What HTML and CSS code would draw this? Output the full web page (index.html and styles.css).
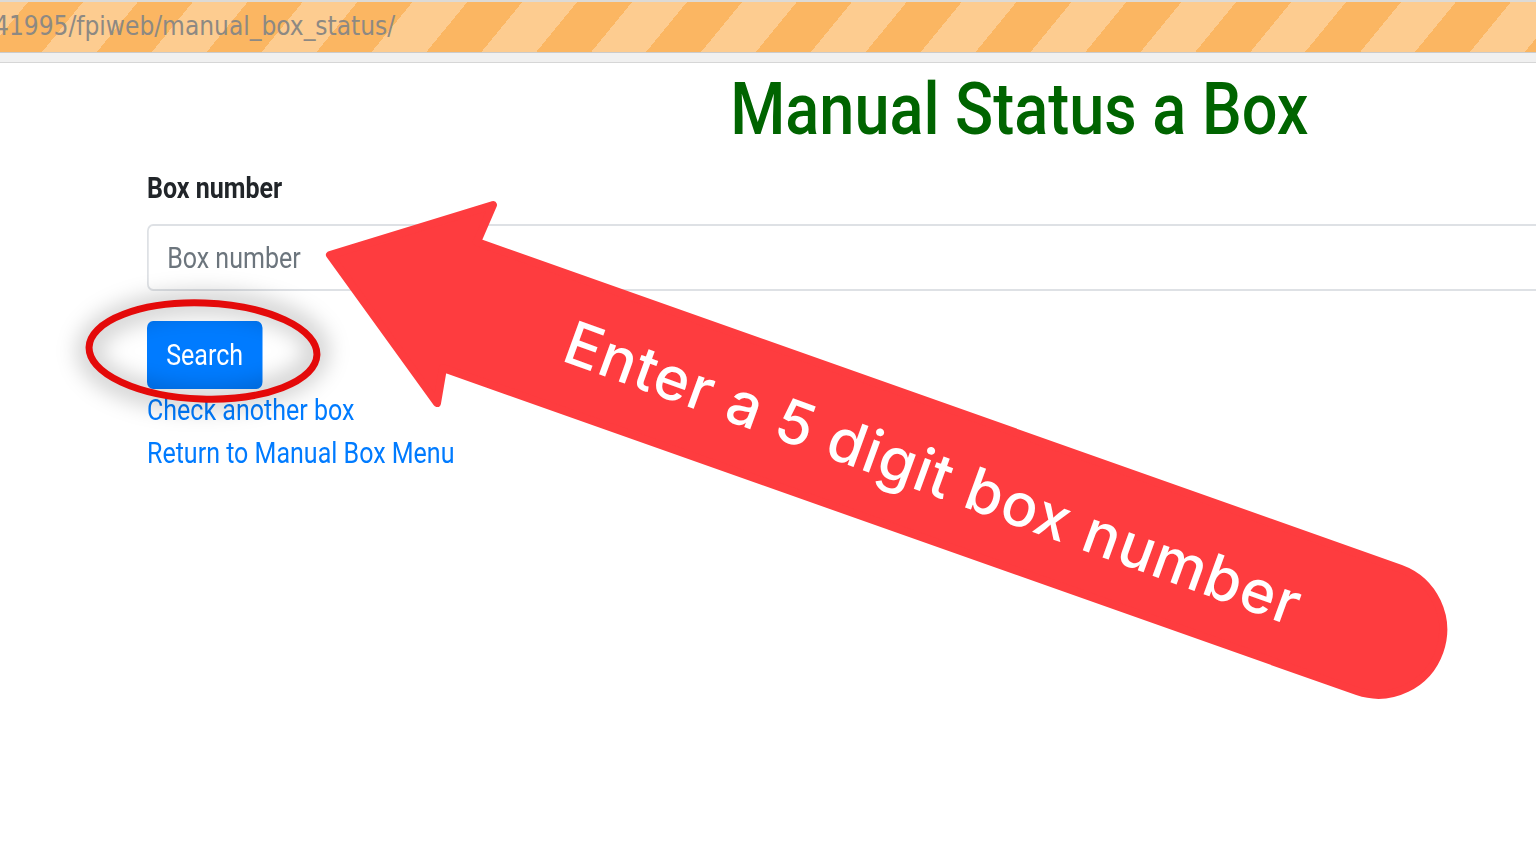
FILE: index.html
```html
<!DOCTYPE html>
<html lang="en">
<head>
<meta charset="utf-8">
<title>Manual Status a Box</title>
<link rel="stylesheet" href="styles.css">
</head>
<body>
<div class="chrome">
  <div class="urlbar"><span class="url">41995/fpiweb/manual_box_status/</span></div>
  <div class="toolbar-edge"></div>
</div>
<div class="viewport">
  <div class="page">
    <div class="container">
      <h1 class="title">Manual Status a Box</h1>
      <form class="box-form">
        <div class="form-group">
          <label class="field-label" for="box">Box number</label>
          <input class="field-input" id="box" type="text" placeholder="Box number">
        </div>
        <button class="btn-search" type="button">Search</button>
      </form>
      <a class="nav-link" href="#">Check another box</a>
      <a class="nav-link" href="#">Return to Manual Box Menu</a>
    </div>
  </div>
</div>
<svg class="overlay" width="1536" height="862" viewBox="0 0 1536 862">
  <defs>
    <filter id="halo" x="-50%" y="-80%" width="200%" height="260%">
      <feGaussianBlur stdDeviation="10"/>
    </filter>
  </defs>
  <ellipse class="halo" cx="203" cy="351" rx="114" ry="48" filter="url(#halo)"/>
  <ellipse class="ring" cx="203" cy="351" rx="114" ry="48" transform="rotate(2 203 351)"/>
  <path class="arrow" d="M330 255 L493 205 L477 242 L1400.6 568.7 A65 65 0 0 1 1357.4 691.3 L443 368 L437 403 Z"/>
  <text class="arrow-text" x="560" y="360" transform="rotate(20 560 360)">Enter a 5 digit box number</text>
</svg>
</body>
</html>
```
FILE: styles.css
```css
html, body {
  margin: 0;
  padding: 0;
  height: 100%;
  overflow: hidden;
  background: #ffffff;
}

.chrome {
  width: 100%;
}

.urlbar {
  height: 50px;
  border-top: 2px solid #dcdad6;
  background: repeating-linear-gradient(129.3deg,
    #fdcc90 0px, #fdcc90 21.6px,
    #fbb662 21.6px, #fbb662 64.2px,
    #fdcc90 64.2px, #fdcc90 85px);
  overflow: hidden;
  white-space: nowrap;
}

.url {
  display: inline-block;
  margin-left: -6px;
  font-family: "DejaVu Sans Condensed", "DejaVu Sans", sans-serif;
  font-stretch: semi-condensed;
  font-size: 26px;
  line-height: 48px;
  color: #8d8983;
}

.toolbar-edge {
  height: 9px;
  background: #f0f0f0;
  border-top: 1px solid #cbcbcb;
  border-bottom: 1px solid #d6d6d6;
}

.viewport {
  width: 100%;
  overflow: hidden;
}

.page {
  width: 2200px;
  transform: scaleX(0.875);
  transform-origin: 0 0;
  font-family: Roboto, "Liberation Sans", sans-serif;
}

.container {
  width: 1994px;
  padding-left: 168px;
}

.title {
  margin: 4px 0 14px;
  font-size: 72px;
  font-weight: 500;
  line-height: 1.2;
  color: #006400;
  text-align: center;
}

.form-group {
  margin-bottom: 30px;
}

.field-label {
  display: block;
  margin-bottom: 14px;
  font-size: 28.6px;
  font-weight: 700;
  line-height: 1.5;
  color: #212529;
}

.field-input {
  display: block;
  box-sizing: border-box;
  width: 100%;
  height: 67px;
  margin: 0;
  padding: 0 21px;
  border: 2px solid #dee1e5;
  border-radius: 7px;
  font-family: Roboto, "Liberation Sans", sans-serif;
  font-size: 28.6px;
  color: #495057;
  background: #fff;
}

.field-input::placeholder {
  color: #6c757d;
}

.btn-search {
  display: block;
  height: 68px;
  margin: 0;
  padding: 0 22px;
  border: none;
  border-radius: 7px;
  background: #007bff;
  color: #fff;
  font-family: Roboto, "Liberation Sans", sans-serif;
  font-size: 28.6px;
  line-height: 1.5;
}

.nav-link {
  display: block;
  width: max-content;
  font-size: 28.6px;
  line-height: 1.5;
  color: #007bff;
  text-decoration: none;
}

.overlay {
  position: absolute;
  top: 0;
  left: 0;
  pointer-events: none;
}

.halo {
  fill: none;
  stroke: rgba(0, 0, 0, 0.16);
  stroke-width: 26;
}

.ring {
  fill: none;
  stroke: #e40a0a;
  stroke-width: 7;
}

.arrow {
  fill: #fe3c3f;
  stroke: #fe3c3f;
  stroke-width: 8;
  stroke-linejoin: round;
}

.arrow-text {
  fill: #ffffff;
  font-family: Inter, "Noto Sans", sans-serif;
  font-size: 60px;
  font-weight: 500;
  letter-spacing: 1px;
}
```
